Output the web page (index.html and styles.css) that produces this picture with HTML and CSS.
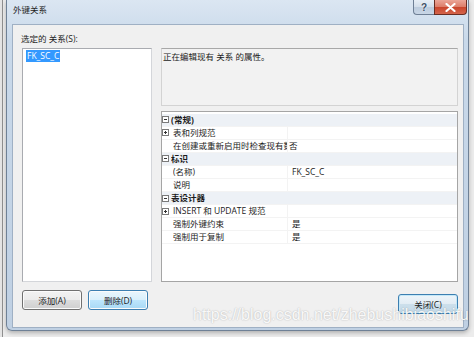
FILE: index.html
```html
<!DOCTYPE html>
<html lang="zh-CN">

<head>
    <meta charset="UTF-8">
    <meta name="viewport" content="width=device-width, initial-scale=1.0">
    <title>外键关系</title>
    <link rel="stylesheet" href="styles.css">
</head>

<body>
    <div class="desk">
        <div class="window">
            <!-- 标题栏 -->
            <div class="titlebar">
                <span class="title">外键关系</span>
                <div class="caption-btns">
                    <span class="cap-help">?</span>
                    <span class="cap-close">
                        <svg width="11" height="9" viewBox="0 0 11 9">
                            <path d="M1.5 1 L9.5 8 M9.5 1 L1.5 8" stroke="#fff" stroke-width="2.2" stroke-linecap="round" />
                        </svg>
                    </span>
                </div>
            </div>

            <div class="client">
                <div class="label">选定的 关系(S):</div>

                <div class="main">
                    <div class="listbox">
                        <span class="item">FK_SC_C</span>
                    </div>

                    <div class="right">
                        <div class="desc">正在编辑现有 关系 的属性。</div>

                        <!-- 属性表格 -->
                        <div class="grid">
                            <div class="row cat">
                                <span class="tog minus"></span>
                                <span class="name">(常规)</span>
                            </div>
                            <div class="row">
                                <span class="tog plus"></span>
                                <span class="name">表和列规范</span>
                                <span class="value"></span>
                            </div>
                            <div class="row">
                                <span></span>
                                <span class="name">在创建或重新启用时检查现有数据</span>
                                <span class="value tight">否</span>
                            </div>
                            <div class="row cat">
                                <span class="tog minus"></span>
                                <span class="name">标识</span>
                            </div>
                            <div class="row">
                                <span></span>
                                <span class="name">(名称)</span>
                                <span class="value">FK_SC_C</span>
                            </div>
                            <div class="row">
                                <span></span>
                                <span class="name">说明</span>
                                <span class="value"></span>
                            </div>
                            <div class="row cat">
                                <span class="tog minus"></span>
                                <span class="name">表设计器</span>
                            </div>
                            <div class="row">
                                <span class="tog plus"></span>
                                <span class="name">INSERT 和 UPDATE 规范</span>
                                <span class="value"></span>
                            </div>
                            <div class="row">
                                <span></span>
                                <span class="name">强制外键约束</span>
                                <span class="value">是</span>
                            </div>
                            <div class="row">
                                <span></span>
                                <span class="name">强制用于复制</span>
                                <span class="value">是</span>
                            </div>
                        </div>
                    </div>
                </div>

                <div class="actions">
                    <div class="left-btns">
                        <button class="btn">添加(A)</button>
                        <button class="btn hot">删除(D)</button>
                    </div>
                    <button class="btn default">关闭(C)</button>
                </div>
            </div>
        </div>

        <div class="watermark">https://blog.csdn.net/zhebushibiaoshifu</div>
    </div>
</body>

</html>
```

FILE: styles.css
```css
* {
    box-sizing: border-box;
}

body {
    margin: 0;
    font-family: "Open Sans", "Noto Sans CJK SC", sans-serif;
    font-size: 8.5px;
    color: #1b1b1b;
}

.desk {
    position: relative;
    width: 474px;
    height: 337px;
    overflow: hidden;
    background: linear-gradient(to right, #e4e4e4 0, #e4e4e4 2px, #8f8f8f 2px, #8f8f8f 3px, #ececec 3px);
}

/* 窗口外框 */
.window {
    margin-left: 6px;
    width: 463px;
    height: 331px;
    border: 1px solid #6f8196;
    border-top: none;
    border-radius: 0 0 6px 6px;
    background: linear-gradient(#dbe6f2, #c9d9ea 40px, #bfd0e3);
    box-shadow: 0 2px 4px rgba(0, 0, 0, 0.25);
    display: flex;
    flex-direction: column;
}

.titlebar {
    height: 24px;
    display: flex;
    justify-content: space-between;
    align-items: flex-start;
    padding: 0 1px 0 6px;
}

.title {
    padding-top: 4px;
    line-height: 12px;
    color: #1e1e1e;
}

.caption-btns {
    display: flex;
}

.cap-help,
.cap-close {
    height: 15px;
    border: 1px solid #6e7f95;
    border-top: none;
    display: flex;
    align-items: center;
    justify-content: center;
}

.cap-help {
    width: 21px;
    border-right: none;
    border-radius: 0 0 0 4px;
    background: linear-gradient(#e7eef6, #d3deea 50%, #bccbdd 50%, #c8d6e6);
    font-family: "Liberation Sans", sans-serif;
    font-size: 10px;
    font-weight: bold;
    color: #3d4f66;
    text-shadow: 0 0 2px #fff;
}

.cap-close {
    width: 33px;
    border-color: #6a2d22;
    border-radius: 0 0 4px 0;
    background: linear-gradient(#eba597, #dc7c68 50%, #c9442b 50%, #d4654c);
}

/* 客户区 */
.client {
    margin: 0 4px 0 5px;
    height: 304px;
    background: #f0f0f0;
    border: 1px solid #9fb0c4;
    padding: 8px 5px 0 9px;
}

.label {
    line-height: 12px;
    margin: 0 0 3px -1px;
}

.main {
    display: grid;
    grid-template-columns: 130px 297px;
    column-gap: 9px;
    height: 234px;
}

.listbox {
    background: #fff;
    border: 1px solid #a9abb0;
    border-right-color: #d4d6da;
    border-bottom-color: #d4d6da;
    padding: 1px 3px;
}

.item {
    display: inline-block;
    background: #3399ff;
    color: #fff;
    line-height: 12px;
    padding: 0 1px;
}

.right {
    display: flex;
    flex-direction: column;
    gap: 5px;
}

.desc {
    height: 58px;
    border: 1px solid #d3d3d3;
    border-top-color: #a8a8a8;
    padding: 2px 1px;
    line-height: 12px;
    background: #f2f2f2;
}

.grid {
    flex: 1;
    background: #fff;
    border: 1px solid #a5a5a5;
    padding-top: 1.5px;
}

.row {
    display: grid;
    grid-template-columns: 11px 114px 1fr;
    height: 13.1px;
    align-items: center;
    border-bottom: 1px solid #f3f3f3;
    line-height: 12px;
}

.row.cat {
    background: #edf1f6;
    font-weight: bold;
}

.row.cat .name {
    grid-column: 2 / 4;
    margin-left: -2px;
}

.name {
    white-space: nowrap;
    overflow: hidden;
}

.value {
    align-self: stretch;
    display: flex;
    align-items: center;
    padding-left: 4px;
    border-left: 1px solid #f3f3f3;
}

.value.tight {
    padding-left: 1px;
}

/* 展开/折叠框 */
.tog {
    position: relative;
    width: 7px;
    height: 7px;
    border: 1px solid #7a7a7a;
    background: #fff;
}

.tog::before,
.tog::after {
    content: "";
    position: absolute;
    background: #333;
}

.tog::before {
    left: 1px;
    top: 2px;
    width: 3px;
    height: 1px;
}

.plus::after {
    left: 2px;
    top: 1px;
    width: 1px;
    height: 3px;
}

/* 按钮 */
.actions {
    display: flex;
    justify-content: space-between;
    align-items: flex-start;
}

.left-btns {
    display: flex;
    gap: 6px;
    margin-top: 8px;
}

.btn {
    width: 60px;
    height: 20px;
    font: inherit;
    color: #1b1b1b;
    border: 1px solid #707070;
    border-radius: 3px;
    background: linear-gradient(#f2f2f2, #ebebeb 50%, #dddddd 50%, #cfcfcf);
    box-shadow: inset 0 0 0 1px #fbfbfb;
    padding: 0;
}

.btn.hot {
    border-color: #3c7fb1;
    background: linear-gradient(#eaf6fd, #d9f0fc 50%, #bee6fd 50%, #a7d9f5);
}

.btn.default {
    margin-top: 12px;
    border-color: #3c7fb1;
    background: linear-gradient(#eef5fa, #e1ecf4 50%, #ccdfeb 50%, #c3d9e8);
    box-shadow: inset 0 0 0 1px #c4e8f8;
}

/* 水印 */
.watermark {
    position: absolute;
    left: 193px;
    top: 306px;
    font-family: "Liberation Sans", sans-serif;
    font-size: 16px;
    line-height: 18px;
    color: rgba(255, 255, 255, 0.92);
    text-shadow: 0 0 1.5px rgba(0, 0, 0, 0.3);
    white-space: nowrap;
}
```
